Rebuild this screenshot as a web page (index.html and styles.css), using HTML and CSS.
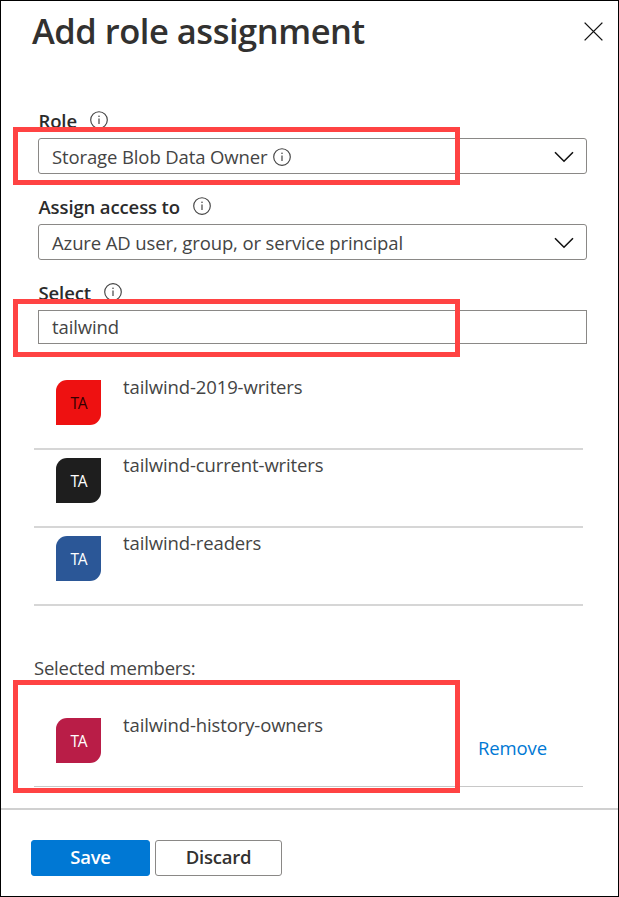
FILE: index.html
```html
<!DOCTYPE html>
<html lang="en">
<head>
<meta charset="utf-8">
<title>Add role assignment</title>
<link rel="stylesheet" href="styles.css">
</head>
<body>
<svg class="defs" aria-hidden="true">
  <symbol id="info" viewBox="0 0 18 18">
    <circle cx="9" cy="9" r="8.3" fill="none" stroke="currentColor" stroke-width="1.15"/>
    <circle cx="9" cy="5.3" r="0.8" fill="currentColor"/>
    <path d="M9 7.4V13" stroke="currentColor" stroke-width="1.2"/>
  </symbol>
  <symbol id="chevron" viewBox="0 0 20 12">
    <path d="M1 1.2L10 10.2L19 1.2" fill="none" stroke="currentColor" stroke-width="1.6"/>
  </symbol>
</svg>
<div class="panel">
  <header class="header">
    <h1 class="title">Add role assignment</h1>
    <svg class="close" viewBox="0 0 18 18"><path d="M.6 .6L17.4 17.4M17.4 .6L.6 17.4" stroke="currentColor" stroke-width="1.3"/></svg>
  </header>
  <main class="form">
    <section class="field">
      <div class="label"><span>Role</span><svg class="info"><use href="#info"/></svg></div>
      <div class="select"><span>Storage Blob Data Owner</span><svg class="info info-inline"><use href="#info"/></svg><svg class="chevron"><use href="#chevron"/></svg></div>
      <div class="highlight highlight-field"></div>
    </section>
    <section class="field">
      <div class="label"><span>Assign access to</span><svg class="info"><use href="#info"/></svg></div>
      <div class="select"><span>Azure AD user, group, or service principal</span><svg class="chevron"><use href="#chevron"/></svg></div>
    </section>
    <section class="field">
      <div class="label"><span>Select</span><svg class="info"><use href="#info"/></svg></div>
      <div class="select input"><span>tailwind</span></div>
      <div class="highlight highlight-field"></div>
    </section>
  </main>
  <ul class="list">
    <li class="row"><span class="avatar red">TA</span><span class="name">tailwind-2019-writers</span></li>
    <li class="row"><span class="avatar black">TA</span><span class="name">tailwind-current-writers</span></li>
    <li class="row"><span class="avatar blue">TA</span><span class="name">tailwind-readers</span></li>
  </ul>
  <section class="members">
    <h2 class="members-title">Selected members:</h2>
    <div class="row member"><span class="avatar crimson">TA</span><span class="name">tailwind-history-owners</span><a class="remove">Remove</a></div>
    <div class="highlight highlight-member"></div>
  </section>
  <footer class="footer">
    <button class="button primary">Save</button>
    <button class="button">Discard</button>
  </footer>
</div>
</body>
</html>
```
FILE: styles.css
```css
* { box-sizing: border-box; }
body {
  margin: 0;
  font: 18.5px/24px "Open Sans", "Noto Sans", sans-serif;
  letter-spacing: -0.12px;
  color: #444;
  background: #fff;
}
.defs { position: absolute; width: 0; height: 0; }
.panel {
  display: flex;
  flex-direction: column;
  width: 619px;
  height: 897px;
  border: 1px solid #000;
}
.header {
  display: flex;
  justify-content: space-between;
  align-items: flex-start;
  height: 107px;
  padding: 6px 15px 0 31px;
}
.title {
  margin: 0;
  font-size: 34.5px;
  line-height: 48px;
  font-weight: 600;
  letter-spacing: -0.48px;
  color: #323130;
  white-space: nowrap;
}
.close { width: 19px; height: 19px; margin-top: 15px; color: #111; }
.form { padding: 0 31px 0 37px; }
.field { position: relative; height: 86px; }
.label {
  display: flex;
  align-items: center;
  gap: 13px;
  height: 30px;
  padding: 0 0 5px 0.5px;
  font-weight: 600;
  color: #2b2b2b;
  white-space: nowrap;
}
.info { width: 18px; height: 18px; color: #444; flex: none; }
.label .info { margin-top: -1px; }
.info-inline { margin-left: 6px; }
.select {
  display: flex;
  align-items: center;
  height: 36px;
  padding: 2px 12px 0 13px;
  border: 1px solid #8a8886;
  border-radius: 3px;
  white-space: nowrap;
}
.input { height: 34px; padding-top: 0; border-radius: 0; }
.chevron { width: 20px; height: 12px; margin-left: auto; color: #111; }
.highlight { position: absolute; border: 5px solid #ff4343; width: 447px; }
.highlight-field { left: -25px; top: 19px; height: 58px; }
.list { list-style: none; margin: 6px 35px 0 33px; padding: 0; }
.row {
  display: flex;
  align-items: flex-start;
  height: 78px;
  padding: 8px 0 0 22px;
  border-bottom: 2px solid #d6d6d6;
}
.avatar {
  display: flex;
  align-items: center;
  justify-content: center;
  width: 45px;
  height: 45px;
  margin-right: 22px;
  border-radius: 11px 0 11px 0;
  font-size: 15.5px;
  letter-spacing: -1.2px;
  color: #fff;
}
.red { background: #ee1111; color: #300; }
.black { background: #1e1e1e; }
.blue { background: #2b5797; }
.crimson { background: #b91d47; }
.name { margin-top: -5px; white-space: nowrap; }
.members { position: relative; padding: 50px 35px 0 33px; }
.members-title {
  height: 53px;
  margin: 0;
  font-size: inherit;
  font-weight: 400;
  letter-spacing: -0.22px;
}
.member { padding-top: 9px; border-bottom-width: 1px; border-color: #c8c8c8; }
.remove { margin: 18px 36px 0 auto; color: #0078d4; }
.highlight-member { left: 12px; top: 74px; height: 113px; }
.footer {
  display: flex;
  gap: 5px;
  margin-top: auto;
  height: 88px;
  padding: 30px 30px 0;
  border-top: 2px solid #d0d0d0;
}
.button {
  width: 127px;
  height: 36px;
  padding: 0 0 2px;
  border: 1px solid #8a8886;
  border-radius: 3px;
  background: #fff;
  font: inherit;
  font-weight: 600;
  letter-spacing: -0.25px;
  color: #323130;
}
.primary { width: 119px; border-color: #0078d4; background: #0078d4; color: #fff; }
```
